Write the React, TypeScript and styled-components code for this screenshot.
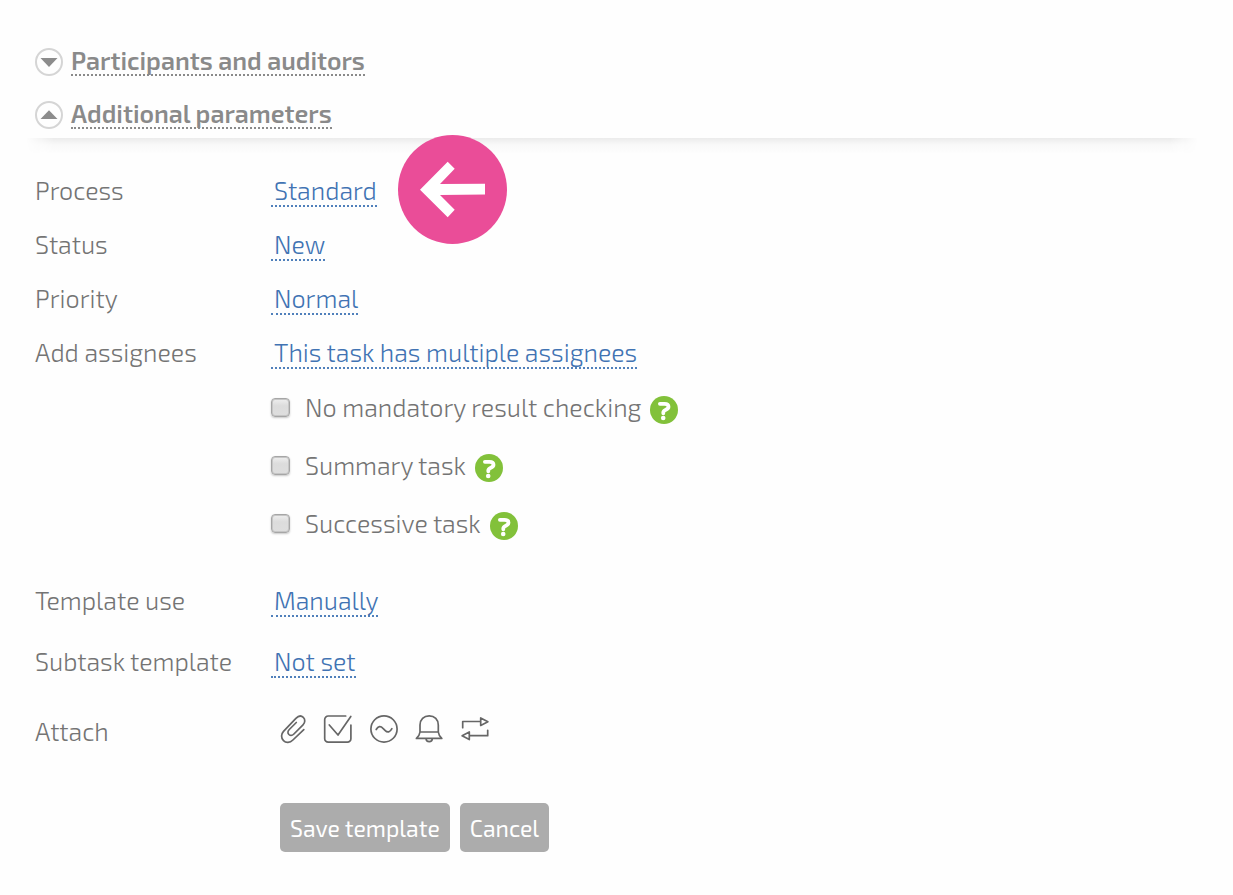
import React from 'react';
import styled, { createGlobalStyle } from 'styled-components';

const GlobalStyle = createGlobalStyle`
  *, *::before, *::after { box-sizing: border-box; }
  body {
    margin: 0;
    background: #fefefe;
    color: #747474;
    font-family: 'Exo 2', Roboto, 'Noto Sans', sans-serif;
    font-size: 25px;
    font-weight: 300;
    line-height: 26px;
  }
  button, input { font: inherit; margin: 0; }
`;

const Page = styled.main`
  padding: 48px 35px 43px;
`;

const Sections = styled.div`
  display: flex;
  flex-direction: column;
  align-items: flex-start;
  gap: 25px;
`;

const SectionToggle = styled.button`
  display: flex;
  gap: 8px;
  padding: 0;
  border: 0;
  background: none;
  color: #8a8a8a;
  font-weight: 600;
  line-height: 24px;
  cursor: pointer;
`;

const SectionTitle = styled.span`
  padding-bottom: 2px;
  border-bottom: 2px dotted currentColor;
`;

const Divider = styled.div`
  height: 16px;
  margin: 9px 0 23px -9px;
  background: linear-gradient(#ebebeb, #f8f8f8 40%, #fefefe);
  mask-image: linear-gradient(to right, transparent, #000 28px, #000 calc(100% - 28px), transparent);
`;

const Form = styled.form`
  display: flex;
  flex-direction: column;
`;

const Fields = styled.div<{ $gap: number; $before?: number }>`
  display: flex;
  flex-direction: column;
  gap: ${(p) => p.$gap}px;
  margin-top: ${(p) => p.$before ?? 0}px;
`;

const Row = styled.div`
  display: grid;
  grid-template-columns: 236px 1fr;
  min-height: 30px;
`;

const Value = styled.div`
  display: flex;
  align-items: flex-start;
`;

const Anchor = styled.div`
  position: relative;
`;

const ValueButton = styled.button`
  display: block;
  padding: 0 0 2px 3px;
  border: 0;
  border-bottom: 2px dotted #5080bb;
  background: none;
  color: #4173b3;
  white-space: nowrap;
  cursor: pointer;
`;

const Pointer = styled.svg`
  position: absolute;
  left: calc(100% + 21px);
  top: -42px;
  width: 109px;
  height: 109px;
`;

const Options = styled.div`
  display: flex;
  flex-direction: column;
  gap: 30px;
  margin: 24px 0 0 236px;
`;

const Option = styled.div`
  display: flex;
  align-items: center;
  height: 28px;
`;

const OptionLabel = styled.label`
  display: flex;
  align-items: center;
  gap: 15px;
`;

const Checkbox = styled.input`
  appearance: none;
  width: 19px;
  height: 19px;
  border: 1px solid #a6a6a6;
  border-radius: 4px;
  background: linear-gradient(#efefef, #dcdcdc 40%, #dedede);
  box-shadow: inset 0 0 0 1px #c6c6c6, 0 1px 2px #c8c8c8;
  &:checked { background: #8a8a8a; }
`;

const HelpButton = styled.button`
  display: flex;
  margin: 6px 0 0 9px;
  padding: 0;
  border: 0;
  background: none;
  cursor: pointer;
`;

const AttachBar = styled.div`
  display: flex;
  gap: 18px;
  padding-left: 7px;
`;

const IconButton = styled.button`
  display: flex;
  width: 28px;
  height: 28px;
  margin-top: -3px;
  padding: 0;
  border: 0;
  background: none;
  color: #666;
  cursor: pointer;
  svg { overflow: visible; }
`;

const Actions = styled.div`
  display: flex;
  gap: 10px;
  margin: 55px 0 0 245px;
`;

const ActionButton = styled.button`
  height: 49px;
  padding: 0 10px;
  border: 0;
  border-radius: 5px;
  background: #acacac;
  color: #fff;
  font-size: 23px;
  font-weight: 400;
  cursor: pointer;
`;

function ToggleIcon({ open }: { open: boolean }) {
  return (
    <svg width="28" height="28" viewBox="0 0 28 28" aria-hidden="true">
      <circle cx="14" cy="14" r="13" fill="none" stroke="#d5d5d5" strokeWidth="2" />
      <path d={open ? 'M5.5 18h17L14 9.3Z' : 'M5.5 10h17L14 19Z'} fill="#8c8c8c" />
    </svg>
  );
}

function Section({ title, open }: { title: string; open: boolean }) {
  return (
    <SectionToggle type="button" aria-expanded={open}>
      <ToggleIcon open={open} />
      <SectionTitle>{title}</SectionTitle>
    </SectionToggle>
  );
}

function Field({ label, value, children }: { label: string; value: string; children?: React.ReactNode }) {
  const id = label.toLowerCase().replace(/ /g, '-');
  return (
    <Row>
      <label htmlFor={id}>{label}</label>
      <Value>
        <Anchor>
          <ValueButton type="button" id={id}>{value}</ValueButton>
          {children}
        </Anchor>
      </Value>
    </Row>
  );
}

function CheckOption({ label }: { label: string }) {
  return (
    <Option>
      <OptionLabel>
        <Checkbox type="checkbox" />
        {label}
      </OptionLabel>
      <HelpButton type="button" aria-label={`Help: ${label}`}>
        <svg width="28" height="28" viewBox="0 0 28 28" aria-hidden="true">
          <circle cx="14" cy="14" r="14" fill="#82c13a" />
          <path d="M9.9 7.8h4.6c2.6 0 4 1 4 2.9 0 3.5-5.2 2.4-5.2 5.8v.8" fill="none" stroke="#fff" strokeWidth="3.8" strokeLinecap="round" />
          <circle cx="13.2" cy="22" r="2.3" fill="#fff" />
        </svg>
      </HelpButton>
    </Option>
  );
}

const attachments = [
  {
    name: 'File',
    shape: (
      <path d="M25.8 14.6 14.9 25C11.9 28 7.9 28.1 5.5 25.6 2.9 23 3 18.9 5.5 16.3L17.9 3.3C20.3.9 23.3.5 25.3 2.3 27.4 4.3 27.2 7.6 25 9.8L15.9 19C14.3 20.6 12.2 20.7 10.9 19.500 9.500 18.100 9.700 16.100 11.300 14.500L18.300 7.500" />
    ),
  },
  {
    name: 'Checklist',
    shape: <path d="M21.7 1H4.2a3.5 3.5 0 0 0-3.5 3.5v19.2a3.5 3.5 0 0 0 3.5 3.5h19.2a3.5 3.5 0 0 0 3.5-3.5V10M5.3 10 14 20 26.8 1.5" />,
  },
  {
    name: 'Analytics',
    shape: (
      <>
        <circle cx="14" cy="14" r="13.1" />
        <path d="M6.2 14.5C8.2 11 10.6 10.7 13 13.3l2 2c2.6 2.7 5 2 6.9-1.6" />
      </>
    ),
  },
  {
    name: 'Reminder',
    shape: <path d="M4 17V10C4 4.5 7.8.8 13.2.8S22.3 4.5 22.3 10v7M4 17h18.3c.4 3 1.5 4.8 3.5 6.4H.4C2.5 21.8 3.6 20 4 17ZM10 23.5c.2 4.2 6.2 4.2 6.4 0" />,
  },
  {
    name: 'Repeat',
    shape: <path d="M.7 12.7V6.5h18M18.7 2.900v7.500l7.200-3.700ZM25.700 15.300v5.400H7.300M7.300 17v7.600L.1 20.800Z" />,
  },
];

export default function App() {
  return (
    <>
      <GlobalStyle />
      <Page>
        <Sections>
          <Section title="Participants and auditors" open={false} />
          <Section title="Additional parameters" open />
        </Sections>
        <Divider />
        <Form onSubmit={(e) => e.preventDefault()}>
          <Fields $gap={24}>
            <Field label="Process" value="Standard">
              <Pointer viewBox="0 0 109 109" aria-hidden="true">
                <circle cx="54.5" cy="54.5" r="54.5" fill="#ea4d98" />
                <path d="M22 54.7 49.7 26.7l7 7L42 49l45-.3v10.7L42 60l14.7 14.8-7 7.5Z" fill="#fff" />
              </Pointer>
            </Field>
            <Field label="Status" value="New" />
            <Field label="Priority" value="Normal" />
            <Field label="Add assignees" value="This task has multiple assignees" />
          </Fields>
          <Options>
            <CheckOption label="No mandatory result checking" />
            <CheckOption label="Summary task" />
            <CheckOption label="Successive task" />
          </Options>
          <Fields $gap={31} $before={50}>
            <Field label="Template use" value="Manually" />
            <Field label="Subtask template" value="Not set" />
          </Fields>
          <Fields $gap={0} $before={40}>
            <Row>
              <span>Attach</span>
              <AttachBar>
                {attachments.map(({ name, shape }) => (
                  <IconButton key={name} type="button" aria-label={name}>
                    <svg width="28" height="28" viewBox="0 0 28 28" fill="none" stroke="currentColor" strokeWidth="1.7" strokeLinecap="round" strokeLinejoin="round" aria-hidden="true">
                      {shape}
                    </svg>
                  </IconButton>
                ))}
              </AttachBar>
            </Row>
          </Fields>
          <Actions>
            <ActionButton type="submit">Save template</ActionButton>
            <ActionButton type="button">Cancel</ActionButton>
          </Actions>
        </Form>
      </Page>
    </>
  );
}
